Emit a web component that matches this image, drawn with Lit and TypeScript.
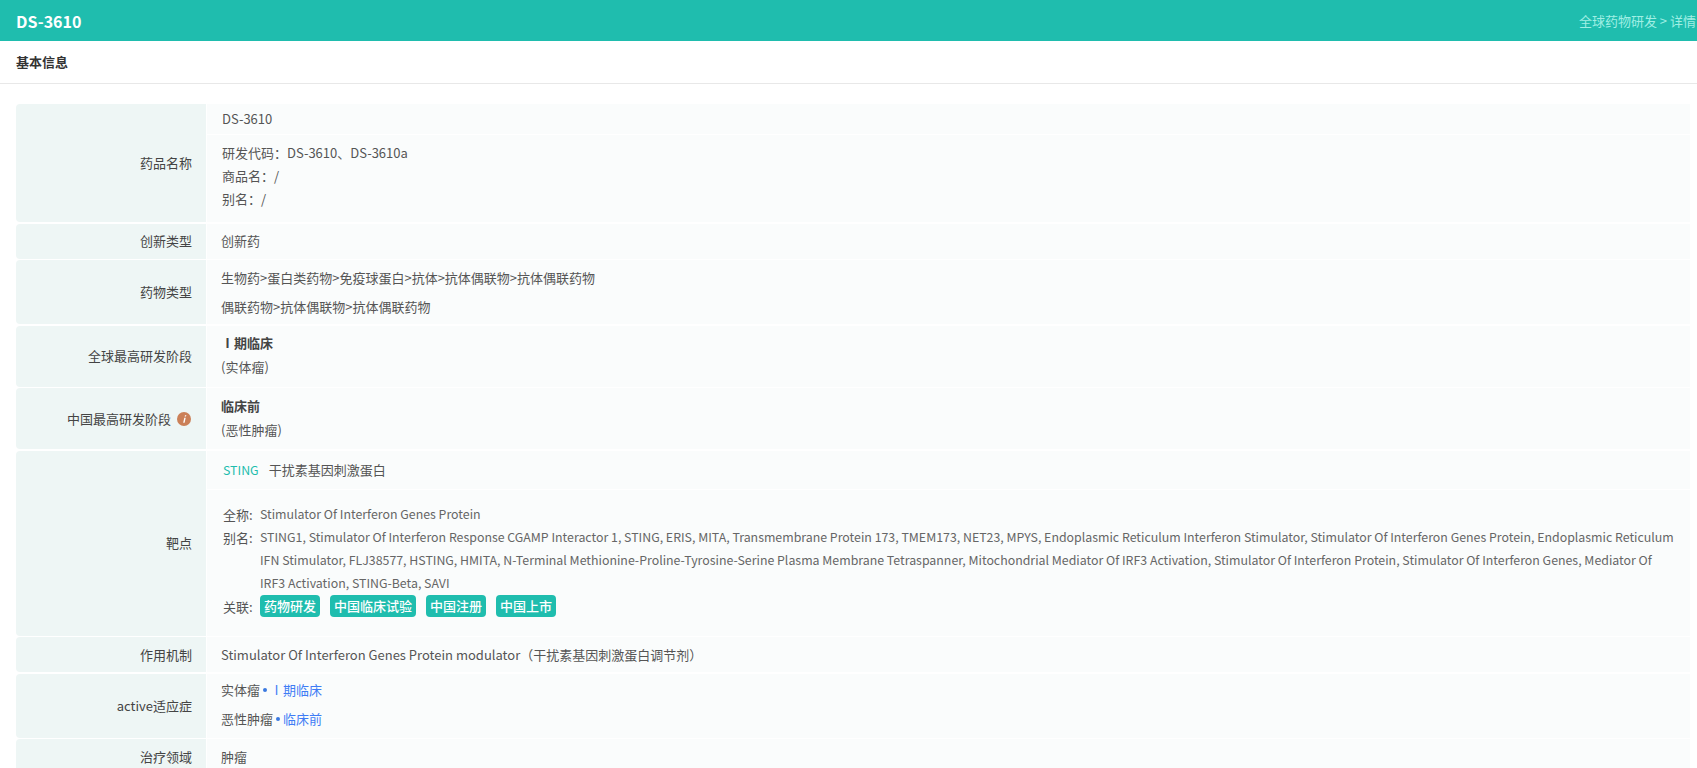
import { LitElement, html, css } from "lit";
import { customElement } from "lit/decorators.js";

const ALIAS = "STING1, Stimulator Of Interferon Response CGAMP Interactor 1, STING, ERIS, MITA, Transmembrane Protein 173, TMEM173, NET23, MPYS, Endoplasmic Reticulum Interferon Stimulator, Stimulator Of Interferon Genes Protein, Endoplasmic Reticulum IFN Stimulator, FLJ38577, HSTING, HMITA, N-Terminal Methionine-Proline-Tyrosine-Serine Plasma Membrane Tetraspanner, Mitochondrial Mediator Of IRF3 Activation, Stimulator Of Interferon Protein, Stimulator Of Interferon Genes, Mediator Of IRF3 Activation, STING-Beta, SAVI";

@customElement("app-root")
export class AppRoot extends LitElement {
  static styles = css`
    :host {
      display: block;
      height: 768px;
      overflow: hidden;
      background: #fff;
      font-family: "Noto Sans CJK SC", "Noto Sans", sans-serif;
      font-size: 13px;
      color: #555;
    }
    .top {
      height: 41px;
      background: #1fbdae;
      display: flex;
      align-items: center;
      justify-content: space-between;
      padding-left: 16px;
      padding-right: 1px;
    }
    .title { color: #fff; font-size: 16px; font-weight: 700; }
    .crumb { color: #a0efe4; font-size: 13px; }
    .section {
      height: 43px;
      box-sizing: border-box;
      padding-bottom: 2px;
      border-bottom: 1px solid #e8e8e8;
      padding-left: 16px;
      display: flex;
      align-items: center;
      font-size: 13px;
      font-weight: 700;
      color: #333;
    }
    .table {
      margin: 20px 7px 0 16px;
      display: flex;
      flex-direction: column;
      gap: 1.5px;
    }
    .row { display: grid; grid-template-columns: 190px 1fr; gap: 1px; }
    .label {
      background: #eef6f5;
      border-radius: 4px 0 0 4px;
      display: flex;
      align-items: center;
      justify-content: flex-end;
      padding-right: 14px;
      padding-bottom: 1px;
      color: #444;
      gap: 6px;
    }
    .value { display: flex; flex-direction: column; gap: 1px; }
    .cell {
      background: #fafcfc;
      padding: 0 14px;
      display: flex;
      flex-direction: column;
      justify-content: center;
      box-sizing: border-box;
    }
    .h30 { height: 30px; padding: 0 15px 2px; }
    .h87 { height: 87px; line-height: 23px; padding: 0 15px 6px; }
    .h35 { height: 35px; padding-bottom: 1px; }
    .h64 { height: 64px; line-height: 29px; padding-bottom: 1px; }
    .h61 { height: 61px; line-height: 24px; padding-bottom: 2px; }
    .active { padding-bottom: 3px; }
    .h38 { height: 38px; padding: 0 16px; }
    .h146 { height: 146px; line-height: 23px; padding: 0 14px 5px 16px; }
    b { color: #444; font-weight: 700; }
    .info {
      width: 14px;
      height: 14px;
      margin: 1px 1px 0 0;
      border-radius: 50%;
      background: #cb8058;
      flex: none;
      display: flex;
      align-items: center;
      justify-content: center;
    }
    .sting { color: #1fbdae; font-size: 12.4px; margin-right: 10px; }
    .kv { display: grid; grid-template-columns: 37px 1fr; }
    .latin { font-size: 12.37px; color: #666; }
    .tags { display: flex; gap: 10px; align-items: center; height: 23px; }
    .tag {
      background: #1fbdae;
      color: #fff;
      font-weight: 500;
      border-radius: 4px;
      padding: 0 4px;
      line-height: 22px;
      height: 22px;
    }
    a { color: #3f7cf5; text-decoration: none; }
    .dot {
      display: inline-block;
      width: 4px;
      height: 4px;
      border-radius: 50%;
      background: #3a79e0;
      margin: 0 3px;
      vertical-align: 3px;
    }
  `;

  render() {
    return html`
      <div class="top"><div class="title">DS-3610</div><div class="crumb">全球药物研发 &gt; 详情</div></div>
      <div class="section">基本信息</div>
      <div class="table">
        <div class="row">
          <div class="label">药品名称</div>
          <div class="value">
            <div class="cell h30">DS-3610</div>
            <div class="cell h87"><div>研发代码：DS-3610、DS-3610a</div><div>商品名：/</div><div>别名：/</div></div>
          </div>
        </div>
        <div class="row"><div class="label">创新类型</div><div class="value"><div class="cell h35">创新药</div></div></div>
        <div class="row">
          <div class="label">药物类型</div>
          <div class="value"><div class="cell h64"><div>生物药&gt;蛋白类药物&gt;免疫球蛋白&gt;抗体&gt;抗体偶联物&gt;抗体偶联药物</div><div>偶联药物&gt;抗体偶联物&gt;抗体偶联药物</div></div></div>
        </div>
        <div class="row">
          <div class="label">全球最高研发阶段</div>
          <div class="value"><div class="cell h61"><div><b>Ⅰ期临床</b></div><div>(实体瘤)</div></div></div>
        </div>
        <div class="row">
          <div class="label">中国最高研发阶段<span class="info"><svg width="8" height="10" viewBox="0 0 8 10"><path d="M5 1.2h1.4L6 2.6H4.6zM4.3 3.8h1.4L4.6 8.8H3.2z" fill="#fff"/></svg></span></div>
          <div class="value"><div class="cell h61"><div><b>临床前</b></div><div>(恶性肿瘤)</div></div></div>
        </div>
        <div class="row">
          <div class="label">靶点</div>
          <div class="value">
            <div class="cell h38"><div><span class="sting">STING</span>干扰素基因刺激蛋白</div></div>
            <div class="cell h146">
              <div class="kv"><span>全称:</span><span class="latin">Stimulator Of Interferon Genes Protein</span></div>
              <div class="kv"><span>别名:</span><span class="latin">${ALIAS}</span></div>
              <div class="kv"><span>关联:</span><div class="tags"><span class="tag">药物研发</span><span class="tag">中国临床试验</span><span class="tag">中国注册</span><span class="tag">中国上市</span></div></div>
            </div>
          </div>
        </div>
        <div class="row"><div class="label">作用机制</div><div class="value"><div class="cell h35">Stimulator Of Interferon Genes Protein modulator（干扰素基因刺激蛋白调节剂）</div></div></div>
        <div class="row">
          <div class="label">active适应症</div>
          <div class="value"><div class="cell h64 active"><div>实体瘤<span class="dot"></span><a>Ⅰ期临床</a></div><div>恶性肿瘤<span class="dot"></span><a>临床前</a></div></div></div>
        </div>
        <div class="row"><div class="label">治疗领域</div><div class="value"><div class="cell h35">肿瘤</div></div></div>
      </div>
    `;
  }
}
